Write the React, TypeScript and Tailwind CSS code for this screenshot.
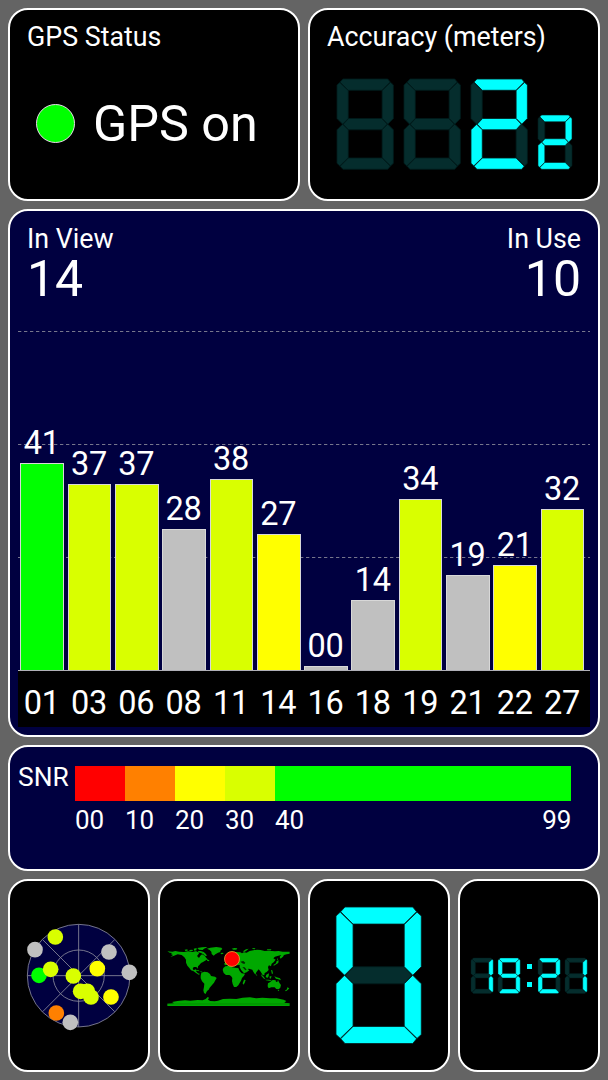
import type { ReactNode } from 'react';

const LIT = '#00ffff';
const DIM = '#052d2d';

const SEGMENTS: Record<string, string> = {
  a: '1.05,0 9,0 9.45,.55 8,2 2,2 .55,.55',
  f: '.5,.6 2,2.05 2,7 1,8 0,7 0,1.05',
  b: '9.5,.6 10,1.05 10,7 9,8 8,7 8,2.05',
  g: '1.1,8 2.05,7 7.95,7 8.9,8 8,9 2,9',
  e: '1,8 2,9 2,13.95 .5,15.4 0,14.95 0,9',
  c: '9,8 10,9 10,14.95 9.5,15.4 8,13.95 8,9',
  d: '2,14 8,14 9.45,15.45 9,16 1.05,16 .55,15.45',
};

const DIGITS: Record<string, string> = {
  ' ': '',
  '0': 'abcdef',
  '1': 'bc',
  '2': 'abged',
  '9': 'abcdfg',
};

function Digit({ value, className, gap = 0.8 }: { value: string; className: string; gap?: number }) {
  const lit = DIGITS[value];
  const order = Object.keys(SEGMENTS).sort((x, y) => Number(lit.includes(x)) - Number(lit.includes(y)));
  return (
    <svg viewBox="0 0 10 16" preserveAspectRatio="none" className={`shrink-0 overflow-visible ${className}`}>
      {order.map((key) => (
        <polygon
          key={key}
          points={SEGMENTS[key]}
          fill={lit.includes(key) ? LIT : DIM}
          stroke="#001c1c"
          strokeWidth={gap}
          vectorEffect="non-scaling-stroke"
        />
      ))}
    </svg>
  );
}

function Card({ className = '', children }: { className?: string; children: ReactNode }) {
  return (
    <section className={`overflow-hidden rounded-[20px] border-2 border-white ${className}`}>{children}</section>
  );
}

const BARS = [
  { id: '01', snr: '41', height: 207, color: 'bg-[#00ff00]' },
  { id: '03', snr: '37', height: 186.5, color: 'bg-[#d9ff00]' },
  { id: '06', snr: '37', height: 186.5, color: 'bg-[#d9ff00]' },
  { id: '08', snr: '28', height: 141, color: 'bg-[#c0c0c0]' },
  { id: '11', snr: '38', height: 191.5, color: 'bg-[#d9ff00]' },
  { id: '14', snr: '27', height: 136, color: 'bg-[#ffff00]' },
  { id: '16', snr: '00', height: 4, color: 'bg-[#c0c0c0]' },
  { id: '18', snr: '14', height: 70, color: 'bg-[#c0c0c0]' },
  { id: '19', snr: '34', height: 171, color: 'bg-[#d9ff00]' },
  { id: '21', snr: '19', height: 95.5, color: 'bg-[#c0c0c0]' },
  { id: '22', snr: '21', height: 105.5, color: 'bg-[#ffff00]' },
  { id: '27', snr: '32', height: 161, color: 'bg-[#d9ff00]' },
];

function SignalChart() {
  return (
    <div className="mx-[8px]">
      <div className="relative flex h-[353px] items-end gap-[3.63px] border-b border-[#b0b0b8] pl-[2.3px]">
        <svg className="absolute inset-0 h-full w-full" aria-hidden="true">
          {[13.5, 126.5, 239.5].map((y) => (
            <line key={y} x1="0" x2="574" y1={y} y2={y} stroke="#76768c" strokeWidth="1" strokeDasharray="3.3 2.7" />
          ))}
        </svg>
        {BARS.map((bar) => (
          <div key={bar.id} className="relative flex w-[43.7px] shrink-0 flex-col items-center">
            <span className="-ml-[1px] h-[39px] text-[32.5px] leading-[38px] tracking-[-0.3px]">{bar.snr}</span>
            <div className={`w-full border-x border-t border-[#d8d8d8] ${bar.color}`} style={{ height: bar.height }} />
          </div>
        ))}
      </div>
      <div className="flex h-[56px] gap-[3.63px] bg-black pl-[2.3px] pt-[13px]">
        {BARS.map((bar) => (
          <span
            key={bar.id}
            className="w-[43.7px] shrink-0 pr-[1px] text-center text-[32.5px] leading-[38px] tracking-[-0.3px]"
          >
            {bar.id}
          </span>
        ))}
      </div>
    </div>
  );
}

const SCALE = [
  { label: '00', width: 'w-[50px]', color: 'bg-[#ff0000]' },
  { label: '10', width: 'w-[50px]', color: 'bg-[#ff8000]' },
  { label: '20', width: 'w-[50px]', color: 'bg-[#ffff00]' },
  { label: '30', width: 'w-[50px]', color: 'bg-[#d9ff00]' },
  { label: '40', width: 'w-[296.4px]', color: 'bg-[#00ff00]' },
];

const SATELLITES: [number, number, string][] = [
  [136, 79, '#d9ff00'],
  [75, 117, '#c0c0c0'],
  [297, 124, '#c0c0c0'],
  [87, 194, '#00ff00'],
  [122, 176, '#d9ff00'],
  [190, 196, '#d9ff00'],
  [262, 174, '#ffff00'],
  [358, 185, '#c0c0c0'],
  [232, 242, '#d9ff00'],
  [212, 242, '#d9ff00'],
  [243, 259, '#d9ff00'],
  [303, 259, '#ffff00'],
  [139, 307, '#ff8000'],
  [181, 335, '#c0c0c0'],
];

function SkyView() {
  return (
    <svg viewBox="51 40 310 310" className="h-[103.3px] w-[103.3px] overflow-visible">
      <g stroke="#8c8c9c" strokeWidth="2.5" fill="none">
        <circle cx="206" cy="195" r="154" fill="#000040" />
        <circle cx="206" cy="195" r="77" />
        <path d="M52 195H360M206 41V349M98 87L314 303M314 87L98 303" />
      </g>
      {SATELLITES.map(([x, y, color]) => (
        <circle key={`${x}-${y}`} cx={x} cy={y} r="23.5" fill={color} />
      ))}
    </svg>
  );
}

function WorldMap() {
  return (
    <svg viewBox="21 33 369 181" className="mr-[1.5px] mt-[1px] h-[60.3px] w-[123px] overflow-visible">
      <g fill="#00a800">
        <path d="M22 49L37 50L46 48L57 50L72 51L84 49L97 51L108 49L118 53L114 59L111 63L117 69L121 62L126 58L134 62L139 69L143 73L135 77L129 81L123 84L118 90L114 94L113 101L109 96L101 96L98 101L101 106L107 103L110 106L108 109L114 115L120 117L116 119L108 114L101 109L93 106L88 99L82 92L78 83L78 74L73 67L65 60L53 58L42 62L31 66L39 60L32 57L37 54L29 53Z" />
        <path d="M74 44L82 43L83 47L76 48ZM87 45L97 44L99 48L90 49ZM101 41L110 39L109 46L103 47ZM112 39L126 37L138 36L142 37L132 41L128 45L117 44ZM114 48L122 48L131 51L137 56L141 62L136 63L130 58L123 54L115 52ZM103 50L110 50L109 53L104 53Z" />
        <path d="M141 41L151 38L169 36L184 38L187 42L181 47L181 51L174 53L166 58L161 62L155 57L154 50L149 45ZM181 54L188 53L191 56L184 58ZM141 73L148 76L147 79L141 77Z" />
        <path d="M105 105L116 106L119 109L112 108ZM121 109L127 110L126 112L121 111Z" />
        <path d="M124 113L133 110L143 112L150 117L153 123L165 125L170 129L166 136L162 143L158 148L153 154L149 158L146 164L141 168L138 174L137 177L132 174L130 166L132 155L133 146L126 139L122 130L122 122Z" />
        <path d="M196 94L211 92L216 97L225 98L235 99L239 108L245 115L255 116L252 122L246 129L243 137L239 144L235 151L229 156L222 156L218 147L216 138L217 129L213 123L208 120L198 120L191 114L188 105L190 99ZM252 134L257 135L254 144L250 149L248 145Z" />
        <path d="M193 84L201 84L203 80L198 77L204 74L210 70L207 66L212 61L219 54L228 51L241 52L246 55L252 52L260 53L269 48L280 46L291 44L302 45L314 48L327 47L345 49L356 48L368 50L389 50V56L380 58L372 60L369 65L362 71L359 66L364 60L355 62L345 65L340 70L347 74L341 82L335 86L333 94L327 91L324 96L326 105L320 111L314 114L313 121L308 120L304 113L301 109L296 103L289 112L286 119L280 110L277 104L267 101L263 102L268 106L260 112L252 115L244 106L239 97L239 90L230 91L225 88L221 90L216 84L209 83L203 89L194 91Z" />
        <path d="M198 66L202 64L204 72L198 74L199 70ZM215 41L223 39L232 40L229 44L220 44ZM250 48L258 43L266 41L258 48L251 52ZM277 39L286 40L285 43L278 42ZM321 43L334 43L333 46L322 46ZM350 78L356 76L355 84L349 88L342 92L340 90L348 85ZM352 68L354 75L351 74ZM289 117L292 121L289 122Z" />
        <path d="M303 118L310 124L316 132L312 131L305 124ZM319 119L327 115L326 124L322 129L317 125ZM329 124L335 124L332 131L329 130ZM333 105L337 106L339 115L336 118ZM316 134L325 134L334 136L332 138L318 136ZM343 124L350 127L360 130L363 136L355 133L348 131Z" />
        <path d="M324 145L331 141L336 136L341 135L347 136L348 140L352 141L354 135L358 143L363 150L361 158L356 163L349 162L344 157L334 157L326 160L323 154ZM353 165L358 165L355 169ZM382 157L388 160L384 164L378 169L375 167L381 163Z" />
        <path d="M22 206L42 205L36 201L52 198L75 196L91 197L113 195L128 196L137 192L143 186L147 188L144 194L151 198L164 199L174 197L189 192L210 191L229 192L248 188L270 187L289 190L307 188L330 190L350 190L371 194L379 198L373 203L389 205V213H22Z" />
      </g>
      <path d="M241 80L250 78L256 83L253 87L247 85ZM247 96L256 106L260 104L254 97Z" fill="#000" opacity=".75" />
      <path d="M22 207H389" stroke="#007000" strokeWidth="1.5" />
      <circle cx="216" cy="72" r="22.5" fill="#ff0000" stroke="#e8a030" strokeWidth="2.5" />
    </svg>
  );
}

export default function App() {
  return (
    <main className="flex h-[1080px] w-[608px] flex-col gap-2 bg-[#646464] p-2 font-['Roboto',sans-serif] text-white">
      <div className="grid h-[193px] shrink-0 grid-cols-2 gap-2">
        <Card className="bg-black pl-[17px] pt-3">
          <h2 className="text-[26.8px] leading-[30px]">GPS Status</h2>
          <div className="flex items-center gap-[18px] pl-[9px] pt-[43px]">
            <span className="mt-[-2px] h-[39px] w-[39px] rounded-full border border-[#e8d8e8] bg-[#00ff00]" />
            <span className="text-[50.3px] leading-[58px]">GPS on</span>
          </div>
        </Card>
        <Card className="bg-black pl-[17px] pt-3">
          <h2 className="text-[26.8px] leading-[30px]">Accuracy (meters)</h2>
          <div className="flex items-end gap-[10.7px] pl-[10px] pt-[26.6px]">
            <Digit value=" " className="h-[90.3px] w-[56.4px]" />
            <Digit value=" " className="h-[90.3px] w-[56.4px]" />
            <Digit value="2" className="h-[90.3px] w-[56.4px]" />
            <Digit value="2" className="h-[54.3px] w-[34px]" gap={0.6} />
          </div>
        </Card>
      </div>

      <Card className="h-[528px] shrink-0 bg-[#000040]">
        <div className="flex h-[107px] justify-between px-[17px] pt-[13px]">
          <div>
            <h2 className="text-[26.8px] leading-[30px]">In View</h2>
            <p className="text-[50px] leading-[50px]">14</p>
          </div>
          <div className="text-right">
            <h2 className="text-[26.8px] leading-[30px]">In Use</h2>
            <p className="text-[50px] leading-[50px]">10</p>
          </div>
        </div>
        <SignalChart />
      </Card>

      <Card className="flex h-[126px] shrink-0 bg-[#000040] pl-[8px] pt-[15px]">
        <h2 className="w-[57px] text-[26.4px] leading-[30px]">SNR</h2>
        <div>
          <div className="mt-[4px] flex h-[35px]">
            {SCALE.map((step) => (
              <div key={step.label} className={`${step.width} ${step.color}`} />
            ))}
          </div>
          <div className="flex pt-[4px] text-[26px] leading-[30px]">
            {SCALE.map((step) => (
              <div key={step.label} className={`${step.width} flex justify-between`}>
                <span>{step.label}</span>
                {step.label === '40' && <span>99</span>}
              </div>
            ))}
          </div>
        </div>
      </Card>

      <div className="grid h-[193px] shrink-0 grid-cols-4 gap-2">
        <Card className="flex items-center justify-center bg-black">
          <SkyView />
        </Card>
        <Card className="flex items-center justify-center bg-black">
          <WorldMap />
        </Card>
        <Card className="flex items-center justify-center bg-black">
          <Digit value="0" className="h-[136.5px] w-[85.3px]" />
        </Card>
        <Card className="flex items-center justify-center bg-black">
          <div className="flex items-center gap-[4.6px]">
            <Digit value="1" className="h-[35.5px] w-[22.2px]" gap={0.4} />
            <Digit value="9" className="h-[35.5px] w-[22.2px]" gap={0.4} />
            <div className="mx-[1.7px] flex w-[5px] flex-col gap-[13px]">
              <span className="h-[5px] bg-[#00ffff]" />
              <span className="h-[5px] bg-[#00ffff]" />
            </div>
            <Digit value="2" className="h-[35.5px] w-[22.2px]" gap={0.4} />
            <Digit value="1" className="h-[35.5px] w-[22.2px]" gap={0.4} />
          </div>
        </Card>
      </div>
    </main>
  );
}
